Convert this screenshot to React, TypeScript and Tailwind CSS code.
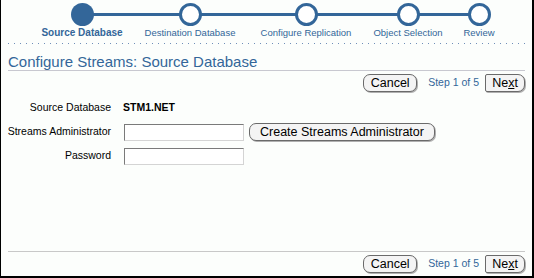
import React from "react";

const font = { fontFamily: '"Liberation Sans", Arial, sans-serif' };

function Step({ label, active, width }: { label: string; active?: boolean; width: string }) {
  return (
    <div className={`flex flex-col items-center ${width}`}>
      <div
        className={
          active
            ? "relative z-10 h-[23px] w-[23px] rounded-full bg-[#336699]"
            : "relative z-10 h-[23px] w-[23px] rounded-full border-[3px] border-[#336699] bg-white"
        }
      />
      <div
        className={
          active
            ? "mt-[1px] whitespace-nowrap text-[10px] font-bold leading-[12px] text-[#336699]"
            : "mt-[1px] whitespace-nowrap text-[9.5px] leading-[12px] text-[#336699]"
        }
      >
        {label}
      </div>
    </div>
  );
}

function Btn({ children, w, next }: { children: React.ReactNode; w: string; next?: boolean }) {
  return (
    <div
      className={`flex h-[18px] ${w} items-center justify-center border border-[#6a6a6a] bg-[#f4f4f4] text-[12.5px] leading-[16px] text-black shadow-[1px_1px_0_#b0b0b0] ${
        next ? "rounded-l-[2px] rounded-r-[7px]" : "rounded-[7px]"
      }`}
    >
      {children}
    </div>
  );
}

function NavRow() {
  return (
    <div className="flex items-center justify-end pr-[7px]">
      <Btn w="w-[54px]">Cancel</Btn>
      <span className="ml-[11px] mr-[6px] text-[10.5px] text-[#336699]">Step 1 of 5</span>
      <Btn w="w-[40px]" next>
        <span>
          Ne<span className="underline">x</span>t
        </span>
      </Btn>
    </div>
  );
}

function Input() {
  return (
    <div className="h-[17px] w-[120px] border border-t-[#7a7a7a] border-l-[#7a7a7a] border-r-[#d4d4d4] border-b-[#d4d4d4] bg-white" />
  );
}

export default function App() {
  return (
    <div
      style={font}
      className="flex h-[278px] w-[534px] flex-col border-b-2 border-l border-r-2 border-black bg-[#fcfefc] text-black"
    >
      {/* train */}
      <div className="relative ml-[27px] mt-[3px] flex">
        <div className="absolute left-[54px] top-[10px] h-[3px] w-[397px] bg-[#336699]" />
        <Step label="Source Database" active width="w-[108px]" />
        <Step label="Destination Database" width="w-[108px]" />
        <Step label="Configure Replication" width="w-[124px]" />
        <Step label="Object Selection" width="w-[80px]" />
        <Step label="Review" width="w-[62px]" />
      </div>
      <div className="mx-[7px] mt-[4px] h-px bg-[linear-gradient(to_right,#6f8fb8_1px,transparent_1px)] bg-[length:6px_1px]" />

      {/* title */}
      <div className="mx-[7px] mt-[9px] border-b border-[#c8c8d0] text-[15px] leading-[17px] text-[#336699]">
        Configure Streams: Source Database
      </div>

      <div className="mt-[3px]">
        <NavRow />
      </div>

      {/* form */}
      <div className="mt-[7px] flex flex-col gap-[6px] text-[10.5px]">
        <div className="flex h-[18px] items-center">
          <div className="w-[110px] text-right">Source Database</div>
          <div className="ml-[12px] font-bold">STM1.NET</div>
        </div>
        <div className="flex h-[18px] items-center">
          <div className="w-[110px] text-right">Streams Administrator</div>
          <div className="ml-[13px]">
            <Input />
          </div>
          <div className="ml-[5px]">
            <Btn w="w-[186px]">Create Streams Administrator</Btn>
          </div>
        </div>
        <div className="flex h-[18px] items-center">
          <div className="w-[110px] text-right">Password</div>
          <div className="ml-[13px]">
            <Input />
          </div>
        </div>
      </div>

      <div className="flex-1" />

      <div className="mx-[7px] border-t border-[#c8c8c8]" />
      <div className="mb-[3px] mt-[3px]">
        <NavRow />
      </div>
    </div>
  );
}
